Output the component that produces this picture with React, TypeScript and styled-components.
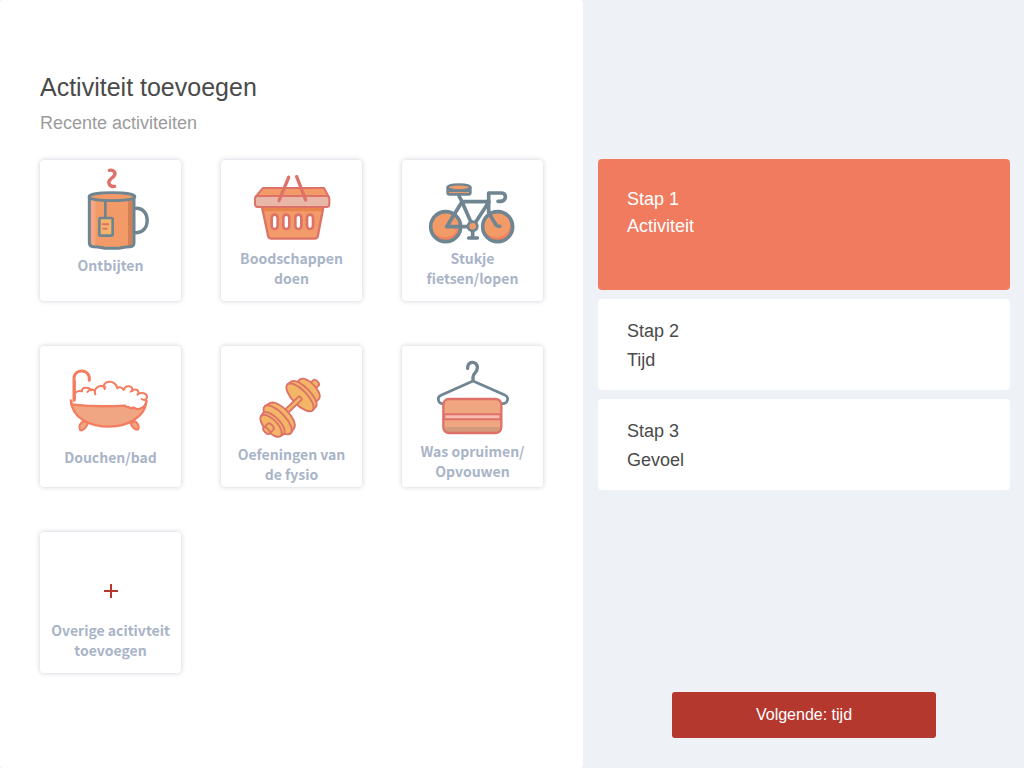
import React from "react";
import styled, { createGlobalStyle } from "styled-components";

const GlobalStyle = createGlobalStyle`
  *, *::before, *::after { box-sizing: border-box; }
  body {
    margin: 0;
    background: #eef1f6;
    color: #4a4a4a;
    font-family: "Liberation Sans", Arial, sans-serif;
  }
  h1, h2, p, ul, ol { margin: 0; padding: 0; font-weight: 400; }
  ul, ol { list-style: none; }
`;

const Page = styled.div`
  display: grid;
  grid-template-columns: 583fr 441fr;
  min-height: 100vh;
`;

const Main = styled.main`
  padding: 71px 40px 40px;
  background: #fff;
  border-radius: 4px;
`;

const Title = styled.h1`
  font-size: 25px;
  line-height: 32px;
`;

const Subtitle = styled.h2`
  margin-top: 9px;
  color: #9b9b9b;
  font-size: 18px;
  line-height: 22px;
`;

const CardGrid = styled.ul`
  display: grid;
  grid-template-columns: repeat(3, 141px);
  justify-content: space-between;
  row-gap: 45px;
  margin-top: 26px;
`;

const Card = styled.button`
  display: flex;
  flex-direction: column;
  align-items: center;
  width: 100%;
  height: 141px;
  padding: 0;
  border: 0;
  border-radius: 4px;
  background: #fff;
  box-shadow: 0 0 5px rgba(60, 80, 105, 0.28);
  color: #a9b4c7;
  font-family: "Noto Sans CJK JP", "Noto Sans", sans-serif;
  font-size: 14px;
  font-weight: 700;
  line-height: 20px;
  text-align: center;
  cursor: pointer;
`;

const Picture = styled.svg`
  flex: none;
  display: block;
  width: 141px;
  fill: none;
  stroke-linecap: round;
  stroke-linejoin: round;
`;

const CardLabel = styled.span`
  white-space: pre-line;
`;

const Aside = styled.aside`
  display: flex;
  flex-direction: column;
  justify-content: space-between;
  padding: 159px 14px 30px 15px;
`;

const Steps = styled.ol`
  display: grid;
  gap: 9px;
`;

const Step = styled.li<{ $active?: boolean }>`
  min-height: ${(p) => (p.$active ? 131 : 91)}px;
  padding: ${(p) => (p.$active ? "27px 29px" : "18px 29px 15px")};
  border-radius: 4px;
  background: ${(p) => (p.$active ? "#f07b5f" : "#fff")};
  color: ${(p) => (p.$active ? "#fff" : "#4a4a4a")};
  font-size: 18px;
  line-height: ${(p) => (p.$active ? 27 : 29)}px;
`;

const NextButton = styled.button`
  align-self: center;
  width: 264px;
  max-width: 100%;
  height: 46px;
  border: 0;
  border-radius: 3px;
  background: #b5382f;
  color: #fff;
  font-family: inherit;
  font-size: 16px;
  cursor: pointer;
`;

const SLATE = "#6f8591";
const ORANGE = "#f29b69";
const ROSE = "#de7269";
const CORAL = "#f47d5f";

const Mug = () => (
  <>
    <path d="M238 61C250 58 260 68 252 78C246 86 232 90 237 101C240 109 248 110 254 109" stroke={ROSE} strokeWidth="10" />
    <path d="M316 175C363 170 364 252 316 248" stroke={SLATE} strokeWidth="10" />
    <path d="M178 140V278Q178 289 190 290Q218 292 226 295H264Q275 292 300 290Q312 289 312 278V140Z" fill={ORANGE} />
    <path d="M182 150H196V290L182 284Z" fill="#f4a782" />
    <path d="M294 150H309V285L294 290Z" fill="#d18058" />
    <path d="M178 140V278Q178 289 190 290Q218 292 226 295H264Q275 292 300 290Q312 289 312 278V140" stroke={SLATE} strokeWidth="9" />
    <ellipse cx="246" cy="140" rx="69" ry="12" fill={ORANGE} stroke={SLATE} strokeWidth="8" />
    <path d="M226 153V204" stroke={SLATE} strokeWidth="8" />
    <rect x="208" y="204" width="40" height="53" rx="4" fill="#f4b46a" stroke={SLATE} strokeWidth="8" />
    <path d="M218 223H235M220 236H230" stroke={ROSE} strokeWidth="6" />
  </>
);

const Basket = () => (
  <>
    <path d="M150 172H334L317 260Q315 266 308 266H178Q171 266 169 260Z" fill={ORANGE} />
    <path d="M151 172H333L331 184H153Z" fill="#e9844f" />
    <path d="M150 172L169 260Q171 266 178 266H308Q315 266 317 260L334 172" stroke={ROSE} strokeWidth="7" />
    <path d="M153 114H336L350 140H131Z" fill={ORANGE} stroke={ROSE} strokeWidth="6" />
    <rect x="129" y="138" width="223" height="33" rx="8" fill="#e8b7a7" stroke={ROSE} strokeWidth="6" />
    {[188, 223, 259, 294].map((x) => (
      <rect key={x} x={x - 9} y="194" width="18" height="43" rx="9" fill="#fff" stroke={ROSE} strokeWidth="8" />
    ))}
    <path d="M230 82L201 152M254 80L281 150" stroke={ROSE} strokeWidth="10" />
  </>
);

const Bicycle = () => (
  <>
    {[158, 314].map((x) => (
      <g key={x}>
        <circle cx={x} cy="230" r="45" fill="#f1825d" />
        <ellipse cx={x - 3} cy="223" rx="41" ry="39" fill={ORANGE} />
        <circle cx={x} cy="230" r="45" stroke={SLATE} strokeWidth="11" />
      </g>
    ))}
    <g stroke={SLATE} strokeWidth="11">
      <path d="M198 138L207 155L161 230H239L288 155H207L239 228" />
      <path d="M325 154H315M318 154C342 157 342 129 326 129H287V188L309 225Q312 229 320 229" />
      <path d="M239 243V263M227 264H253" />
      <circle cx="239" cy="229" r="14" fill={ORANGE} strokeWidth="8" />
    </g>
    <path d="M164 112V128Q164 133 170 133H226Q232 133 232 128V112Z" fill={ORANGE} />
    <path d="M164 112V128Q164 133 170 133H226Q232 133 232 128V112M166 122H230" stroke={SLATE} strokeWidth="8" />
    <ellipse cx="198" cy="112" rx="34" ry="9" fill={ORANGE} stroke={SLATE} strokeWidth="7" />
  </>
);

const Bath = () => (
  <g stroke={CORAL}>
    <path d="M162 252C149 258 145 269 150 279C159 284 170 270 174 258ZM312 252C324 256 329 270 325 277C316 281 306 270 302 260Z" fill="#f0a583" strokeWidth="6" />
    <path d="M124 192C125 243 180 269 238 269C298 269 346 235 349 194C346 207 340 211 334 213C326 218 317 216 312 212C306 215 299 213 296 210C292 211 287 209 285 206Q200 211 124 202Z" fill="#f0a583" strokeWidth="7" />
    <path d="M132 190V124C132 94 182 93 178 130" strokeWidth="9" />
    <path d="M135 188V132" strokeWidth="5" />
    <path d="M137 167Q145 159 156 163C153 149 178 149 183 160M172 165Q181 152 194 161M196 172C189 151 211 142 226 151M224 156C211 130 258 125 262 154M262 153Q273 146 281 159M283 156C287 143 310 145 307 162M302 164C312 152 331 158 324 171M322 173C333 163 352 169 351 182Q345 193 335 186M346 188Q352 191 349 195" strokeWidth="6" />
    <path d="M122 190L124 203" strokeWidth="6" />
  </g>
);

const Dumbbell = () => (
  <g transform="translate(238 209) rotate(-44) scale(.95)" stroke={ROSE} strokeWidth="6" fill="#f3b566">
    <path d="M90 -12H108C117 -12 117 12 108 12H90Z" />
    <path d="M66 -43H79C105 -39 105 40 79 43H66Z" />
    <path d="M40 -59L56 -57C82 -50 82 48 56 54L40 55Z" />
    <ellipse cx="40" cy="-2" rx="23" ry="57" />
    <path d="M-30 -7H37C43 -7 43 7 37 7H-30Z" />
    <path d="M-60 -59L-41 -55C-12 -47 -12 47 -41 55L-60 59Z" />
    <ellipse cx="-60" cy="0" rx="24" ry="59" />
    <path d="M-90 -45L-77 -48C-52 -42 -52 42 -77 46L-90 43Z" />
    <ellipse cx="-88" cy="-1" rx="20" ry="44" />
    <path d="M-109 -13H-91C-82 -12 -82 12 -91 13H-109Z" />
    <ellipse cx="-109" cy="0" rx="7" ry="13" />
  </g>
);

const Hanger = () => (
  <>
    <path d="M224 94C222 71 253 70 253 92C253 108 240 107 240 121V130" stroke={SLATE} strokeWidth="10" />
    <path d="M150 200C133 200 132 179 144 175L240 132L337 175C349 181 345 200 329 200" stroke={SLATE} strokeWidth="8" />
    <rect x="151" y="186" width="174" height="102" rx="17" fill="#f0a680" />
    <path d="M154 270H322Q320 287 308 287H168Q156 287 154 270Z" fill="#d39a7c" />
    <rect x="151" y="186" width="174" height="102" rx="17" stroke={ROSE} strokeWidth="7" />
    <rect x="154" y="232" width="168" height="15" rx="3" fill="#fcbcb0" stroke={ROSE} strokeWidth="6" />
  </>
);

const Plus = () => <path d="M222 204H264M243 183V225" stroke="#b5382f" strokeWidth="6" strokeLinecap="butt" />;

/* Drawings use three units to a pixel; x and y give the drawing's origin. */
const activities = [
  { label: "Ontbijten", Art: Mug, x: 30, y: 30, height: 95 },
  { label: "Boodschappen\ndoen", Art: Basket, x: 27, y: 30, height: 88 },
  { label: "Stukje\nfietsen/lopen", Art: Bicycle, x: 27, y: 30, height: 88 },
  { label: "Douchen/bad", Art: Bath, x: 30, y: 27, height: 101 },
  { label: "Oefeningen van\nde fysio", Art: Dumbbell, x: 27, y: 27, height: 98 },
  { label: "Was opruimen/\nOpvouwen", Art: Hanger, x: 27, y: 27, height: 95 },
  { label: "Overige acitivteit\ntoevoegen", Art: Plus, x: 30, y: 27, height: 88 },
];

const steps = ["Activiteit", "Tijd", "Gevoel"];

export default function App() {
  return (
    <>
      <GlobalStyle />
      <Page>
        <Main>
          <Title>Activiteit toevoegen</Title>
          <Subtitle>Recente activiteiten</Subtitle>
          <CardGrid>
            {activities.map(({ label, Art, x, y, height }) => (
              <li key={label}>
                <Card type="button">
                  <Picture height={height} viewBox={`${x} ${y} 423 ${height * 3}`} aria-hidden="true">
                    <Art />
                  </Picture>
                  <CardLabel>{label}</CardLabel>
                </Card>
              </li>
            ))}
          </CardGrid>
        </Main>
        <Aside>
          <Steps>
            {steps.map((name, i) => (
              <Step key={name} $active={i === 0} aria-current={i === 0 ? "step" : undefined}>
                <p>Stap {i + 1}</p>
                <p>{name}</p>
              </Step>
            ))}
          </Steps>
          <NextButton type="button">Volgende: tijd</NextButton>
        </Aside>
      </Page>
    </>
  );
}
